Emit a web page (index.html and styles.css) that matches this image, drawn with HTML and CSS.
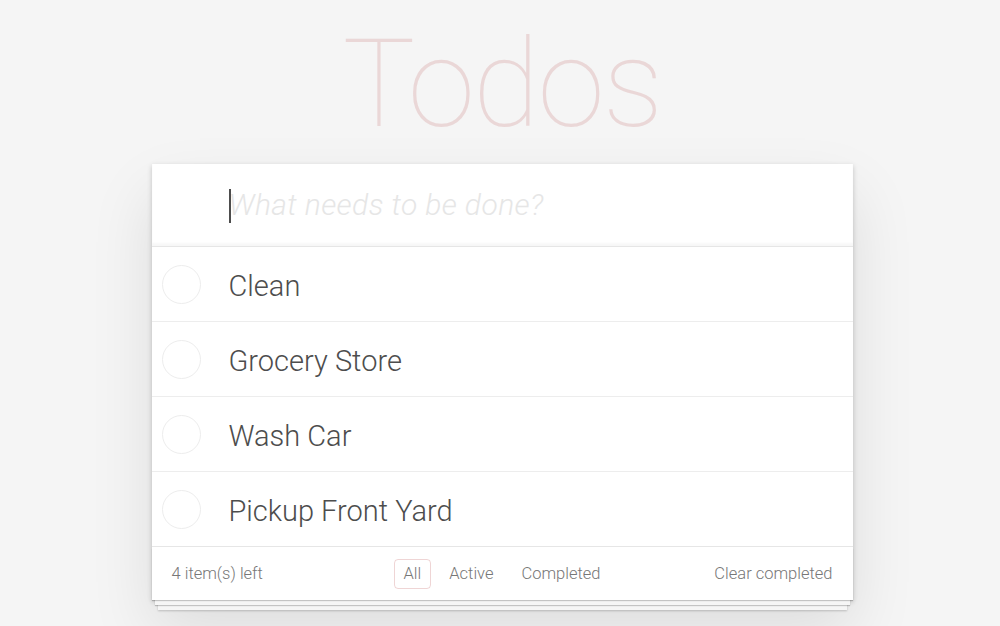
FILE: index.html
```html
<!DOCTYPE html>
<html>
<head>
<meta charset="utf-8">
<title>Todos</title>
<link rel="stylesheet" href="styles.css">
</head>
<body>
<section class="todoapp">
  <h1 class="title">Todos</h1>
  <div class="card">
    <header class="header">
      <span class="caret"></span>
      <input class="new-todo" placeholder="What needs to be done?">
    </header>
    <ul class="todo-list">
      <li class="todo"><span class="toggle"></span><label class="label">Clean</label></li>
      <li class="todo"><span class="toggle"></span><label class="label">Grocery Store</label></li>
      <li class="todo"><span class="toggle"></span><label class="label">Wash Car</label></li>
      <li class="todo"><span class="toggle"></span><label class="label">Pickup Front Yard</label></li>
    </ul>
    <footer class="footer">
      <span class="count">4 item(s) left</span>
      <ul class="filters">
        <li><a class="filter selected">All</a></li>
        <li><a class="filter">Active</a></li>
        <li><a class="filter">Completed</a></li>
      </ul>
      <span class="clear">Clear completed</span>
    </footer>
  </div>
</section>
</body>
</html>
```
FILE: styles.css
```css
html, body { margin: 0; padding: 0; }
html { height: 100%; overflow: hidden; background: #f5f5f5; }
body {
  min-height: 100%;
  box-sizing: border-box;
  background: #f5f5f5;
  font-family: Roboto, "Helvetica Neue", Arial, sans-serif;
  font-weight: 300;
  color: #4d4d4d;
  -webkit-font-smoothing: antialiased;
  padding-left: 4px;
}
.todoapp {
  width: 701px;
  margin: 0 auto;
  padding-top: 10px;
}
.title {
  margin: 0;
  height: 154px;
  font-size: 122px;
  line-height: 150px;
  font-weight: 100;
  text-align: center;
  color: rgba(175, 47, 47, 0.15);
  letter-spacing: -2px;
}
.card {
  position: relative;
  background: #fff;
  box-shadow: 0 2px 5px 0 rgba(0,0,0,0.2), 0 30px 60px 0 rgba(0,0,0,0.1);
}
.header {
  position: relative;
  height: 83px;
  box-shadow: inset 0 -3px 2px rgba(0,0,0,0.03);
  border-bottom: 1px solid #e6e6e6;
  box-sizing: border-box;
}
.new-todo {
  display: block;
  width: 100%;
  height: 100%;
  box-sizing: border-box;
  border: none;
  outline: none;
  padding: 0 20px 2px 77px;
  font-family: inherit;
  font-weight: 300;
  font-size: 30px;
  letter-spacing: 0.4px;
  color: #4d4d4d;
  background: transparent;
}
.new-todo::placeholder {
  font-style: italic;
  font-weight: 300;
  color: #e6e6e6;
}
.caret {
  position: absolute;
  left: 77px;
  top: 25px;
  width: 2px;
  height: 34px;
  background: #4d4d4d;
}
.todo-list {
  list-style: none;
  margin: 0;
  padding: 0;
}
.todo {
  display: flex;
  align-items: center;
  height: 75px;
  box-sizing: border-box;
  border-bottom: 1px solid #ededed;
}
.todo:last-child { border-bottom: none; height: 74px; }
.toggle {
  width: 39px;
  height: 39px;
  margin-left: 10px;
  margin-right: 28px;
  border: 1px solid #ededed;
  border-radius: 50%;
  box-sizing: border-box;
  flex: none;
}
.label {
  font-size: 29px;
  line-height: 36px;
  padding-top: 4px;
  color: #4d4d4d;
}
.footer {
  position: relative;
  display: grid;
  grid-template-columns: 1fr auto 1fr;
  align-items: center;
  height: 54px;
  box-sizing: border-box;
  padding: 0 20px 0 20px;
  border-top: 1px solid #e6e6e6;
  font-size: 16.5px;
  color: #777;
}
.footer::before {
  content: "";
  position: absolute;
  left: 0; right: 0; bottom: 0;
  height: 52px;
  box-shadow:
    0 1px 1px rgba(0,0,0,0.2),
    0 8px 0 -3px #f6f6f6,
    0 9px 1px -3px rgba(0,0,0,0.2),
    0 16px 0 -6px #f6f6f6,
    0 17px 2px -6px rgba(0,0,0,0.2);
}
.count, .filters, .clear { position: relative; }
.filters {
  list-style: none;
  margin: 0;
  padding: 0;
  display: flex;
  gap: 8px;
}
.filter {
  display: block;
  padding: 4px 9px;
  border: 1px solid transparent;
  border-radius: 4px;
  line-height: 20px;
}
.filter.selected { border-color: rgba(175,47,47,0.2); }
.clear { justify-self: end; }
```
